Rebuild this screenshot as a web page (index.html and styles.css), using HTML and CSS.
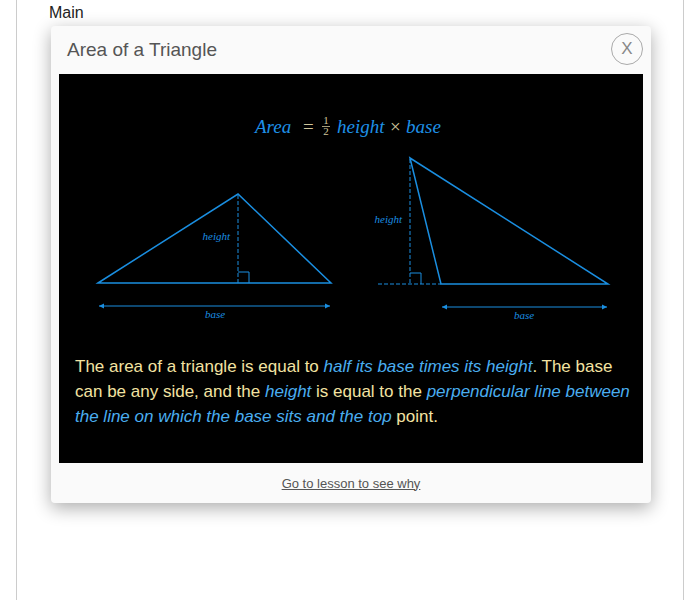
FILE: index.html
```html
<!DOCTYPE html>
<html>
<head>
<meta charset="utf-8">
<link rel="stylesheet" href="styles.css">
</head>
<body>
<div class="page">
  <div class="main-label">Main</div>
  <div class="card">
    <div class="card-header">
      <div class="card-title">Area of a Triangle</div>
      <div class="close-btn">X</div>
    </div>
    <div class="panel">
      <svg class="diagram" width="584" height="280" viewBox="0 0 584 280">
        <defs>
          <marker id="arr" markerWidth="6" markerHeight="6" refX="5" refY="3" orient="auto-start-reverse" markerUnits="userSpaceOnUse">
            <path d="M0,0.5 L5,3 L0,5.5 Z" fill="#1a8ee0"/>
          </marker>
        </defs>
        <g class="formula">
          <text x="196" y="59" class="f-var">Area</text>
          <text x="244" y="59" class="f-op">=</text>
          <text x="267" y="50" class="f-num" text-anchor="middle">1</text>
          <line x1="263" y1="52.5" x2="271" y2="52.5" stroke="#cfc59a" stroke-width="0.8"/>
          <text x="267" y="61" class="f-num" text-anchor="middle">2</text>
          <text x="278" y="59" class="f-var">height</text>
          <text x="331" y="59" class="f-op">×</text>
          <text x="347" y="59" class="f-var">base</text>
        </g>
        <g class="shapes" fill="none" stroke="#1a8ee0">
          <polygon points="39,209 179,120 272,209" stroke-width="1.5"/>
          <line x1="179" y1="121" x2="179" y2="209" stroke-width="1" stroke-dasharray="4,2"/>
          <polyline points="179,198 190,198 190,209" stroke-width="1"/>
          <line x1="40" y1="232" x2="271" y2="232" stroke-width="1" marker-start="url(#arr)" marker-end="url(#arr)"/>

          <polygon points="351,84 382,210 549,210" stroke-width="1.5"/>
          <line x1="351" y1="85" x2="351" y2="210" stroke-width="1" stroke-dasharray="4,2"/>
          <line x1="319" y1="210" x2="382" y2="210" stroke-width="1" stroke-dasharray="4,2"/>
          <polyline points="351,199 362,199 362,210" stroke-width="1"/>
          <line x1="383" y1="233" x2="548" y2="233" stroke-width="1" marker-start="url(#arr)" marker-end="url(#arr)"/>
        </g>
        <g class="labels">
          <text x="171" y="166" text-anchor="end">height</text>
          <text x="156" y="244" text-anchor="middle">base</text>
          <text x="343" y="149" text-anchor="end">height</text>
          <text x="465" y="245" text-anchor="middle">base</text>
        </g>
      </svg>
      <p class="desc">The area of a triangle is equal to <em>half its base times its height</em>. The base can be any side, and the <em>height</em> is equal to the <em>perpendicular line between the line on which the base sits and the top</em> point.</p>
    </div>
    <div class="card-footer">
      <a class="lesson-link" href="#">Go to lesson to see why</a>
    </div>
  </div>
</div>
</body>
</html>
```

FILE: styles.css
```css
html, body {
  margin: 0;
  padding: 0;
  background: #ffffff;
  font-family: "Liberation Sans", Arial, sans-serif;
}

.page {
  margin-left: 16px;
  width: 634px;
  min-height: 600px;
  border-left: 1px solid #cccccc;
  border-right: 1px solid #cccccc;
  padding-left: 32px;
  box-sizing: content-box;
}

.main-label {
  font-size: 16px;
  color: #222222;
  padding-top: 4px;
  line-height: 18px;
}

.card {
  margin-top: 4px;
  margin-left: 2px;
  width: 600px;
  background: #fafafa;
  border-radius: 4px;
  box-shadow: 0 5px 18px rgba(0, 0, 0, 0.33);
}

.card-header {
  height: 48px;
  display: flex;
  align-items: center;
  justify-content: space-between;
  padding: 0 8px 0 16px;
}

.card-title {
  font-size: 19px;
  line-height: 22px;
  color: #555555;
  margin-top: 0;
}

.close-btn {
  width: 30px;
  height: 30px;
  border: 1px solid #aaaaaa;
  border-radius: 50%;
  display: flex;
  align-items: center;
  justify-content: center;
  font-size: 17px;
  color: #888888;
  margin-top: -2px;
}

.panel {
  margin: 0 8px;
  background: #000000;
  height: 389px;
}

.diagram {
  display: block;
}

.f-var {
  font-family: "Liberation Serif", "Times New Roman", serif;
  font-style: italic;
  font-size: 19px;
  fill: #1e90e6;
}

.f-op {
  font-family: "Liberation Serif", "Times New Roman", serif;
  font-size: 19px;
  fill: #cfc59a;
}

.f-num {
  font-family: "Liberation Serif", "Times New Roman", serif;
  font-size: 11px;
  fill: #cfc59a;
}

.labels text {
  font-family: "Liberation Serif", "Times New Roman", serif;
  font-style: italic;
  font-size: 11px;
  fill: #1a8ee0;
}

.desc {
  margin: 0;
  padding: 0 4px 0 16px;
  font-size: 17px;
  line-height: 25px;
  color: #f3e3a2;
}

.desc em {
  color: #4aaef0;
}

.card-footer {
  height: 40px;
  display: flex;
  align-items: center;
  justify-content: center;
}

.lesson-link {
  font-size: 13px;
  color: #555555;
  text-decoration: underline;
}
```
